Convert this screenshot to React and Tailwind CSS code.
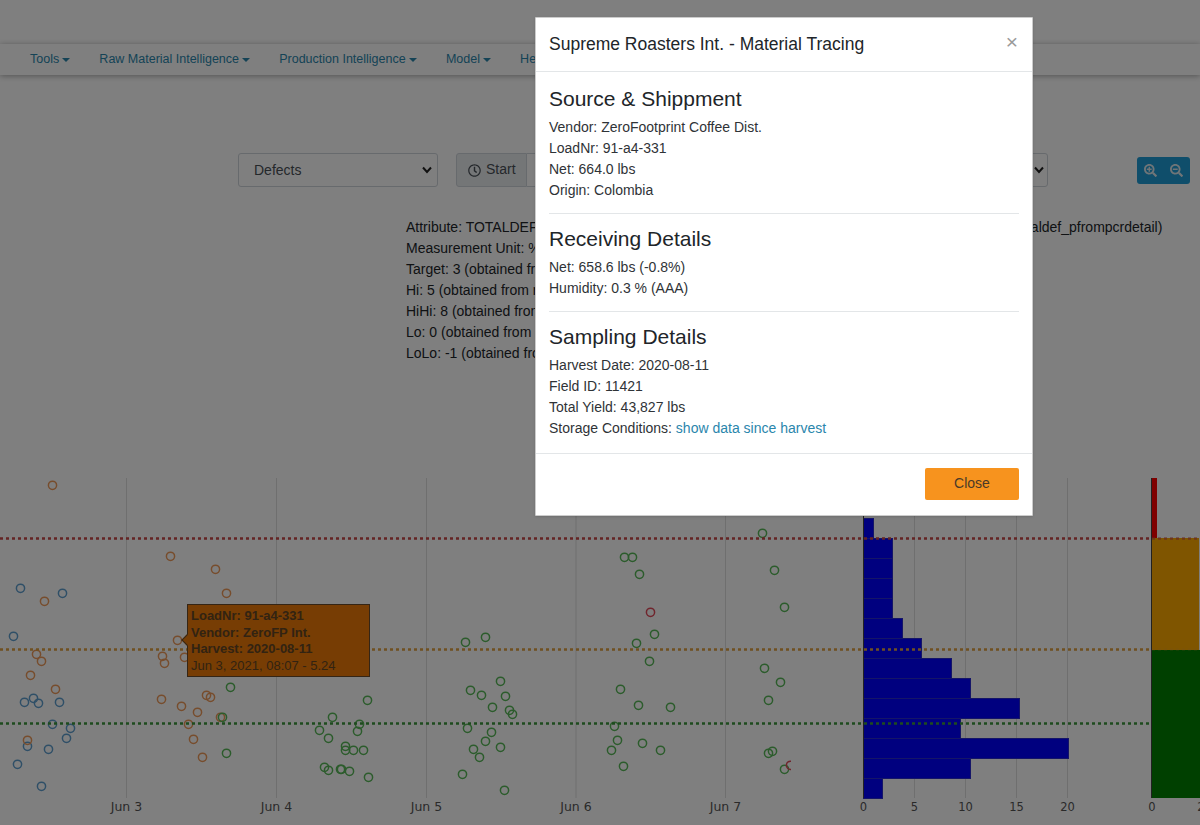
import React from 'react';
import { FaRegClock, FaSearchPlus, FaSearchMinus } from 'react-icons/fa';

// points are in chart coordinates (svg starts at y = 478)
const BLUE = [[20,588],[62,593],[13,636],[33,698],[24,702],[38,703],[59,702],[52,724],[70,728],[66,738],[27,746],[48,749],[17,764],[41,786]];
const ORANGE = [[52,485],[44,601],[36,654],[41,661],[30,675],[55,689],[27,740],[170,556],[215,569],[226,593],[177,640],[162,656],[164,663],[184,657],[161,699],[206,695],[210,697],[181,706],[197,712],[220,717],[188,724],[193,739],[202,757]];
const GREEN = [
  [230,687],[222,717],[226,753],[367,700],[332,717],[359,724],[319,730],[357,731],[328,738],[345,746],[345,750],[353,750],[363,750],[324,767],[328,770],[340,769],[341,769],[349,771],[368,777],
  [465,642],[485,637],[500,681],[470,690],[481,695],[505,696],[492,707],[509,710],[512,714],[467,728],[491,732],[485,741],[473,749],[500,747],[479,757],[462,774],[504,790],
  [624,557],[632,557],[639,574],[654,634],[636,643],[649,661],[620,689],[638,705],[670,707],[614,726],[617,740],[642,743],[611,750],[660,750],[623,766],
  [762,533],[774,570],[784,607],[764,668],[780,682],[768,700],[768,753],[772,751],[784,769],
];
const RED = [[650,612],[790,765]];
const BARS = [[518,10],[538,29],[558,29],[578,29],[598,29],[618,39],[638,58],[658,88],[678,107],[698,156],[718,97],[738,205],[758,107],[778,19]];
const DAYS = [['Jun 3',126.5],['Jun 4',276.5],['Jun 5',426.5],['Jun 6',576],['Jun 7',725.5]];
const COUNTS = [[0,863.5],[5,914.5],[10,965.5],[15,1016.5],[20,1067.5]];
const LIMITS = [[538,'#c84848'],[649,'#e0a040'],[723,'#3c963c']];

const NAV = ['Tools', 'Raw Material Intelligence', 'Production Intelligence', 'Model', 'Help'];
const INFO = [
  'Attribute: TOTALDEFECTS_PCT (obtained from mes.roasting.production.quality.coffee_pcr_detail.totaldef_pfrompcrdetail)',
  'Measurement Unit: %',
  'Target: 3 (obtained from recipe)',
  'Hi: 5 (obtained from recipe)',
  'HiHi: 8 (obtained from recipe)',
  'Lo: 0 (obtained from recipe)',
  'LoLo: -1 (obtained from recipe)',
];

const Chart = () => (
  <svg width="1200" height="347" viewBox="0 478 1200 347" className="block">
    <defs>
      <clipPath id="scatterClip"><rect x="0" y="478" width="791" height="347" /></clipPath>
    </defs>
    {DAYS.map(([label, x]) => (
      <line key={label} x1={x} x2={x} y1="478" y2="798" stroke="#dfdfdf" />
    ))}
    {COUNTS.slice(1).map(([label, x]) => (
      <line key={label} x1={x} x2={x} y1="478" y2="798" stroke="#dfdfdf" />
    ))}
    <g clipPath="url(#scatterClip)" fill="none" strokeWidth="1.5">
      {BLUE.map(([x, y], i) => <circle key={i} cx={x + 0.5} cy={y + 0.3} r="4.1" stroke="#5f9fcf" />)}
      {ORANGE.map(([x, y], i) => <circle key={i} cx={x + 0.5} cy={y + 0.3} r="4.1" stroke="#ee9a5a" />)}
      {GREEN.map(([x, y], i) => <circle key={i} cx={x + 0.5} cy={y + 0.3} r="4.1" stroke="#58b858" />)}
      {RED.map(([x, y], i) => <circle key={i} cx={x + 0.5} cy={y + 0.3} r="4.1" stroke="#e04a5a" />)}
    </g>
    {BARS.map(([y, w]) => (
      <rect key={y} x="863.5" y={y + 0.5} width={w} height="20" fill="#0000ff" stroke="#2a2ad0" />
    ))}
    <line x1="863.5" x2="863.5" y1="478" y2="798" stroke="#444" />
    <rect x="1151" y="478" width="6" height="60" fill="#ff0000" />
    <rect x="1151" y="538" width="48" height="112" fill="#ffaa00" />
    <rect x="1151" y="650" width="49" height="148" fill="#008000" />
    <line x1="1151.5" x2="1151.5" y1="478" y2="798" stroke="#444" />
    {LIMITS.map(([y, color]) => (
      <line key={y} x1="0" x2="1149" y1={y + 0.5} y2={y + 0.5} stroke={color} strokeWidth="2.6" strokeDasharray="3 3" />
    ))}
    <line x1="1152" x2="1199" y1="538.5" y2="538.5" stroke="#c84848" strokeOpacity="0.6" strokeWidth="2.6" strokeDasharray="3 3" />
    <line x1="1152" x2="1199" y1="649.5" y2="649.5" stroke="#e0a040" strokeOpacity="0.3" strokeWidth="2" strokeDasharray="3 3" />
    <g fontFamily="'DejaVu Sans', sans-serif" fill="#555" textAnchor="middle">
      {DAYS.map(([label, x]) => <text key={label} x={x} y="811" fontSize="12.5">{label}</text>)}
      {COUNTS.map(([label, x]) => <text key={label} x={x} y="811" fontSize="11.5">{label}</text>)}
      <text x="1152" y="811" fontSize="11.5">0</text>
      <text x="1201" y="811" fontSize="11.5">2</text>
    </g>
  </svg>
);

const Section = ({ title, lines, children }) => (
  <div>
    <h4 className="text-[21px] leading-[25px] mb-[6px] text-[#212529]">{title}</h4>
    {lines.map((line) => <div key={line}>{line}</div>)}
    {children}
  </div>
);

const App = () => {
  return (
    <div className="relative h-[825px] overflow-hidden bg-white text-[14px] leading-[21px] text-[#212529] font-['Liberation_Sans',Arial,sans-serif]">
      <div className="h-[44px]" />
      <nav className="h-[31px] flex items-center pl-[15.4px] text-[12.5px] text-[#2a86ac] shadow-[0_1px_6px_rgba(0,0,0,0.35)]">
        {NAV.map((item, i) => (
          <a key={item} className="flex items-center px-[14.6px]">
            {item}
            {i < 4 && <span className="ml-[3px] border-x-[4px] border-t-[4px] border-x-transparent border-t-[#2a86ac]" />}
          </a>
        ))}
      </nav>

      <div className="mt-[78px] h-[34px] flex items-center pl-[238px] pr-[10px]">
        <div className="w-[200px] h-[34px] flex items-center justify-between pl-[15px] pr-[5px] border border-[#ced4da] rounded-[3px] text-[#495057]">
          Defects
          <svg width="10" height="8" viewBox="0 0 10 8"><path d="M1 1.5 5 6l4-4.5" fill="none" stroke="#222" strokeWidth="2" /></svg>
        </div>
        <div className="ml-[18px] flex h-[34px] flex-1">
          <div className="w-[71px] flex items-center gap-[5px] pl-[11px] pb-[2px] bg-[#e9ecef] border border-[#ced4da] rounded-l-[3px] text-[#495057]">
            <FaRegClock className="text-[13px] mt-[2px]" />
            Start
          </div>
          <div className="flex-1 border border-l-0 border-[#ced4da]" />
        </div>
        <div className="w-[200px] h-[34px] ml-[20px] flex items-center justify-end pr-[3px] border border-[#ced4da] rounded-[3px]">
          <svg width="10" height="8" viewBox="0 0 10 8"><path d="M1 1.5 5 6l4-4.5" fill="none" stroke="#222" strokeWidth="2" /></svg>
        </div>
        <div className="ml-[89px] w-[53px] h-[27px] flex items-center justify-between px-[7px] rounded-[3px] bg-[#1f9dd6] text-[#dfeaf0] text-[13px]">
          <FaSearchPlus />
          <FaSearchMinus />
        </div>
      </div>

      <div className="mt-[30px] pl-[406px] whitespace-nowrap">
        {INFO.map((line) => <div key={line}>{line}</div>)}
      </div>

      <div className="relative mt-[114px]">
        <Chart />
        <div className="absolute left-[187px] top-[126px] w-[183px] h-[73px] px-[3px] pt-[3px] bg-[#ef7a08] border border-[#6a4a2a] text-[13px] leading-[16.5px] text-[#644624]">
          <span className="absolute left-[-5px] top-[31px] w-[8px] h-[8px] rotate-45 bg-[#ef7a08] border-l border-b border-[#6a4a2a]" />
          <div className="font-bold">LoadNr: 91-a4-331</div>
          <div className="font-bold">Vendor: ZeroFP Int.</div>
          <div className="font-bold">Harvest: 2020-08-11</div>
          <div>Jun 3, 2021, 08:07 - 5.24</div>
        </div>
      </div>

      <div className="absolute inset-0 bg-black/50">
        <div className="absolute left-[535px] top-[17px] w-[498px] bg-white border border-black/20 rounded-[1px] shadow-sm text-[#2f3337]">
          <div className="h-[54px] flex items-center justify-between px-[13px] border-b border-[#e3e6e8]">
            <h5 className="text-[17.5px] text-[#212529]">Supreme Roasters Int. - Material Tracing</h5>
            <span className="text-[21px] leading-none text-[#9a9a9a] pb-[6px] pr-[1px]">×</span>
          </div>
          <div className="px-[13px] pt-[14px] pb-[14px]">
            <Section title="Source & Shippment" lines={['Vendor: ZeroFootprint Coffee Dist.', 'LoadNr: 91-a4-331', 'Net: 664.0 lbs', 'Origin: Colombia']} />
            <hr className="mt-[12px] mb-[12px] border-[#e3e6e8]" />
            <Section title="Receiving Details" lines={['Net: 658.6 lbs (-0.8%)', 'Humidity: 0.3 % (AAA)']} />
            <hr className="mt-[12px] mb-[12px] border-[#e3e6e8]" />
            <Section title="Sampling Details" lines={['Harvest Date: 2020-08-11', 'Field ID: 11421', 'Total Yield: 43,827 lbs']}>
              <div>Storage Conditions: <a className="text-[#2a86ac]">show data since harvest</a></div>
            </Section>
          </div>
          <div className="h-[62px] flex items-center justify-end px-[13px] pb-[2px] border-t border-[#e3e6e8]">
            <button className="w-[94px] h-[32px] bg-[#f7931e] rounded-[2px] text-[#4a3a28]">Close</button>
          </div>
        </div>
      </div>
    </div>
  );
};

export default App;
